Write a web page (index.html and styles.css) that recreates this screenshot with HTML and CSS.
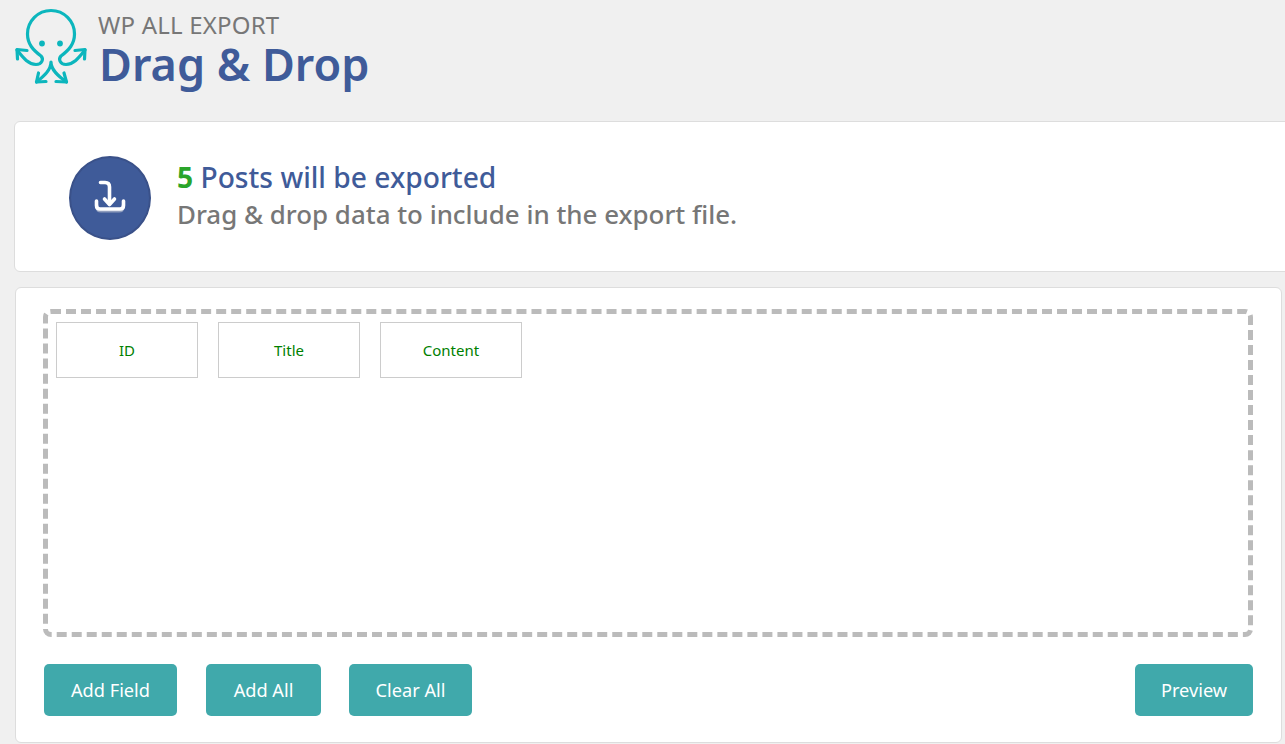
FILE: index.html
```html
<!DOCTYPE html>
<html lang="en">
<head>
<meta charset="utf-8">
<title>WP All Export - Drag &amp; Drop</title>
<link rel="stylesheet" href="styles.css">
</head>
<body>
<header class="header">
  <svg class="logo" width="74" height="80" viewBox="14 8 74 80" fill="none" stroke="#0cb6bd" stroke-width="3.200" stroke-linecap="round" stroke-linejoin="round">
    <path d="M17 50C22 56 27 64 36 64.500C42 64.500 44 59 41 56C33 50 27.500 44 27.500 34C27.500 21 38 10.500 51 10.500C64 10.500 74.500 21 74.500 34C74.500 44 69 50 61 56C58 59 60 64.500 66 64.500C75 64 80 56 85 50"/>
    <path d="M17.500 59L17 49.500L27 50.500M84.500 59L85 49.500L75 50.500"/>
    <path d="M51 62C51 70 44 76 36.500 82M51 62C51 70 58 76 66.500 82"/>
    <path d="M38.500 73L36.500 82L46 81.500M64 73L66.500 82L56 81.500"/>
    <circle cx="42" cy="43.500" r="2.900" fill="#0cb6bd" stroke="none"/>
    <circle cx="60" cy="43.500" r="2.900" fill="#0cb6bd" stroke="none"/>
  </svg>
  <div class="heading">
    <div class="eyebrow">WP ALL EXPORT</div>
    <h1 class="title">Drag &amp; Drop</h1>
  </div>
</header>
<section class="summary">
  <div class="badge">
    <svg width="40" height="40" viewBox="0 0 40 40" fill="none" stroke-linecap="round" stroke-linejoin="round">
      <path class="shade" d="M7 27.500V29C7 31.500 8.500 33 11 33H29C31.500 33 33 31.500 33 29V27.500"/>
      <g class="glyph">
        <path d="M10.500 4.500H15C18 4.500 19.500 6 19.500 9V26"/>
        <path d="M14.500 21L19.500 26.500L24.500 21"/>
        <path d="M6.500 23V27.500C6.500 30 8 31 10 31H30C32 31 33.500 30 33.500 27.500V23"/>
      </g>
    </svg>
  </div>
  <div class="summary-text">
    <div class="count"><span class="num">5</span> Posts will be exported</div>
    <div class="hint">Drag &amp; drop data to include in the export file.</div>
  </div>
</section>
<main class="panel">
  <div class="dropzone">
    <div class="field">ID</div>
    <div class="field">Title</div>
    <div class="field">Content</div>
  </div>
  <div class="actions">
    <button class="btn btn-field">Add Field</button>
    <button class="btn btn-all">Add All</button>
    <button class="btn btn-clear">Clear All</button>
    <button class="btn btn-preview">Preview</button>
  </div>
</main>
</body>
</html>
```
FILE: styles.css
```css
* { box-sizing: border-box; }
html, body { margin: 0; padding: 0; height: 100%; overflow: hidden; }
body {
  background: #f0f0f0;
  font-family: "Noto Sans", "Open Sans", sans-serif;
  padding: 8px 0 0 14px;
  width: 1285px;
}
.header { display: flex; align-items: flex-start; height: 113px; }
.logo { display: block; flex: none; }
.heading { margin-left: 10px; }
.eyebrow { font-size: 24px; line-height: 30px; color: #777; margin-top: 2px; letter-spacing: 0.2px; white-space: nowrap; }
.title { margin: 0 0 0 1px; font-size: 45px; line-height: 48px; font-weight: 600; color: #3f5b99; white-space: nowrap; }
.summary {
  display: flex; align-items: center;
  width: 1290px; height: 151px;
  background: #fff;
  border: 1px solid #ddd;
  border-radius: 6px;
  padding-left: 54px;
}
.badge {
  width: 82px; height: 84px; border-radius: 50%;
  margin-top: 2px;
  background: #3f5b99; border: 2px solid #3a5189;
  display: flex; align-items: center; justify-content: center;
  flex: none;
}
.shade { stroke: #8f9dbd; stroke-width: 3; }
.glyph { stroke: #fff; stroke-width: 3.6; }
.summary-text { margin-left: 26px; padding-bottom: 2px; }
.count { font-size: 28.2px; line-height: 37px; font-weight: 500; color: #3f5b99; white-space: nowrap; }
.num { color: #2aa52a; font-weight: 700; }
.hint { font-size: 25.9px; line-height: 37px; font-weight: 500; color: #777; white-space: nowrap; }
.panel {
  width: 1267px; height: 456px;
  margin: 15px 0 0 1px;
  background: #fff;
  border: 1px solid #ddd;
  border-radius: 6px;
  padding: 21px 28px 0 27px;
}
.dropzone {
  display: flex; align-items: flex-start; gap: 20px;
  height: 328px;
  border: 5px dashed #bbb;
  border-radius: 8px;
  padding: 8px;
}
.field {
  width: 142px; height: 56px;
  border: 1px solid #ccc;
  display: flex; align-items: center; justify-content: center;
  font-size: 15px; color: #008000;
}
.actions { display: flex; gap: 29px; margin: 27px 0 0 1px; }
.btn {
  height: 52px; border: 0; border-radius: 5px;
  background: #40a9ab; color: #fff;
  font-family: inherit; font-size: 18.2px;
  padding: 0;
}
.btn-field { width: 133px; }
.btn-all { width: 115px; }
.btn-clear { width: 123px; margin-left: -1px; }
.btn-preview { width: 118px; margin-left: auto; }
```
